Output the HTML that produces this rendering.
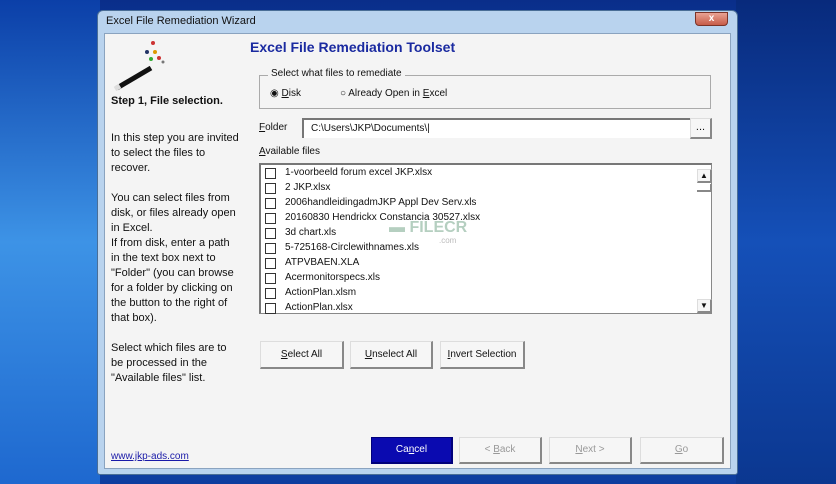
<!DOCTYPE html>
<html><head><style>
*{margin:0;padding:0;box-sizing:border-box}
body{width:836px;height:484px;overflow:hidden;position:relative;font-family:"Liberation Sans",sans-serif;font-size:11px;color:#111;
background:linear-gradient(180deg,#0a2e8a 0%,#1457c4 40%,#1e6ad6 70%,#0d3c9e 100%)}
.bgl{position:absolute;left:0;top:0;width:100px;height:484px;background:linear-gradient(180deg,#0b3fa8,#3d93e6 50%,#1e68cf)}
.bgr{position:absolute;right:0;top:0;width:100px;height:484px;background:linear-gradient(180deg,#082a7c,#1550b8 50%,#0b3790)}
.win{position:absolute;left:97px;top:10px;width:641px;height:465px;background:#b9d3ee;border:1px solid #4a6e96;border-radius:6px 6px 3px 3px}
.title{position:absolute;left:8px;top:4px;font-size:11px;color:#111}
.close{position:absolute;left:597px;top:1px;width:33px;height:14px;background:linear-gradient(#e8a293,#c75c48);border:1px solid #7a3328;border-radius:0 0 4px 4px;color:#fff;font-weight:bold;text-align:center;line-height:12px;font-size:10px}
.in{position:absolute;left:6px;top:22px;width:627px;height:436px;background:#f4f4f4;border:1px solid #8aa3bf}
.a{position:absolute;white-space:nowrap}
.btn{position:absolute;background:#f6f6f6;border:1px solid #ddd;border-right:2px solid #888;border-bottom:2px solid #888;text-align:center;font-size:11px}
.cb{position:absolute;left:4px;width:11px;height:11px;border:1px solid #333;background:#fff}
</style></head><body>
<div class="bgl"></div><div class="bgr"></div>
<div class="win">
<div class="title">Excel File Remediation Wizard</div>
<div class="close">x</div>
<div class="in">
<svg class="a" style="left:6px;top:4px" width="60" height="56" viewBox="0 0 60 56">
<line x1="6" y1="50" x2="40" y2="30" stroke="#111" stroke-width="5"/>
<line x1="4" y1="51" x2="9" y2="48" stroke="#ddd" stroke-width="5"/>
<circle cx="42" cy="5" r="2" fill="#c33"/><circle cx="36" cy="14" r="2" fill="#236"/>
<circle cx="44" cy="14" r="2" fill="#d90"/><circle cx="40" cy="21" r="2" fill="#3a3"/>
<circle cx="48" cy="20" r="2" fill="#c33"/><circle cx="52" cy="24" r="1.5" fill="#777"/>
</svg>
</div>
</div>
<div class="a" style="left:111px;top:95px;font-weight:bold">Step 1, File selection.</div>
<div class="a" style="left:111px;top:131px;line-height:15px">In this step you are invited<br>to select the files to<br>recover.<br><br>You can select files from<br>disk, or files already open<br>in Excel.<br>If from disk, enter a path<br>in the text box next to<br>"Folder" (you can browse<br>for a folder by clicking on<br>the button to the right of<br>that box).<br><br>Select which files are to<br>be processed in the<br>"Available files" list.</div>
<div class="a" style="left:111px;top:451px;color:#1a1aa8;text-decoration:underline;font-size:10px">www.jkp-ads.com</div>
<div class="a" style="left:250px;top:39px;font-weight:bold;font-size:14px;color:#1a2aa0">Excel File Remediation Toolset</div>
<div class="a" style="left:259px;top:75px;width:452px;height:34px;border:1px solid #aaa"></div>
<div class="a" style="left:268px;top:68px;background:#f4f4f4;padding:0 3px;font-size:10px">Select what files to remediate</div>
<div class="a" style="left:270px;top:88px;font-size:10px">◉ <u>D</u>isk</div>
<div class="a" style="left:340px;top:88px;font-size:10px">○ Already Open in <u>E</u>xcel</div>
<div class="a" style="left:259px;top:122px;font-size:10px"><u>F</u>older</div>
<div class="a" style="left:302px;top:118px;width:388px;height:20px;background:#fff;border-top:2px solid #777;border-left:2px solid #777;padding:3px 7px;font-size:10px">C:\Users\JKP\Documents\|</div>
<div class="btn" style="left:690px;top:118px;width:22px;height:21px;line-height:16px">...</div>
<div class="a" style="left:259px;top:146px;font-size:10px"><u>A</u>vailable files</div>
<div class="a" style="left:259px;top:163px;width:453px;height:151px;background:#fff;border:1px solid #888;border-top:2px solid #777;border-left:2px solid #777;font-size:10px">
<div style="position:absolute;left:0;top:0">
<div class="cb" style="top:3px"></div><div class="a" style="left:24px;top:2px">1-voorbeeld forum excel JKP.xlsx</div>
<div class="cb" style="top:18px"></div><div class="a" style="left:24px;top:17px">2 JKP.xlsx</div>
<div class="cb" style="top:33px"></div><div class="a" style="left:24px;top:32px">2006handleidingadmJKP Appl Dev Serv.xls</div>
<div class="cb" style="top:48px"></div><div class="a" style="left:24px;top:47px">20160830 Hendrickx Constancia 30527.xlsx</div>
<div class="cb" style="top:63px"></div><div class="a" style="left:24px;top:62px">3d chart.xls</div>
<div class="cb" style="top:78px"></div><div class="a" style="left:24px;top:77px">5-725168-Circlewithnames.xls</div>
<div class="cb" style="top:93px"></div><div class="a" style="left:24px;top:92px">ATPVBAEN.XLA</div>
<div class="cb" style="top:108px"></div><div class="a" style="left:24px;top:107px">Acermonitorspecs.xls</div>
<div class="cb" style="top:123px"></div><div class="a" style="left:24px;top:122px">ActionPlan.xlsm</div>
<div class="cb" style="top:138px"></div><div class="a" style="left:24px;top:137px">ActionPlan.xlsx</div>
</div>
<div class="a" style="left:128px;top:54px;color:#b5cfc0;font-size:16px;font-weight:bold">▬ FILECR</div>
<div class="a" style="left:178px;top:71px;color:#bbb;font-size:8px">.com</div>
<div class="btn" style="left:436px;top:4px;width:15px;height:14px;line-height:11px;font-size:8px">▲</div>
<div class="a" style="left:436px;top:19px;width:15px;height:8px;border-bottom:2px solid #888;border-right:2px solid #888"></div>
<div class="btn" style="left:436px;top:134px;width:15px;height:14px;line-height:11px;font-size:8px">▼</div>
</div>
<div class="btn" style="left:260px;top:341px;width:84px;height:28px;line-height:25px;font-size:10px"><u>S</u>elect All</div>
<div class="btn" style="left:350px;top:341px;width:83px;height:28px;line-height:25px;font-size:10px"><u>U</u>nselect All</div>
<div class="btn" style="left:440px;top:341px;width:85px;height:28px;line-height:25px;font-size:10px"><u>I</u>nvert Selection</div>
<div class="btn" style="left:371px;top:437px;width:82px;height:27px;line-height:24px;background:#0a0ab0;color:#fff;border-color:#00007a;font-size:10px">Ca<u>n</u>cel</div>
<div class="btn" style="left:459px;top:437px;width:83px;height:27px;line-height:24px;color:#999;font-size:10px">&lt; <u>B</u>ack</div>
<div class="btn" style="left:549px;top:437px;width:83px;height:27px;line-height:24px;color:#999;font-size:10px"><u>N</u>ext &gt;</div>
<div class="btn" style="left:640px;top:437px;width:84px;height:27px;line-height:24px;color:#999;font-size:10px"><u>G</u>o</div>
</body></html>
